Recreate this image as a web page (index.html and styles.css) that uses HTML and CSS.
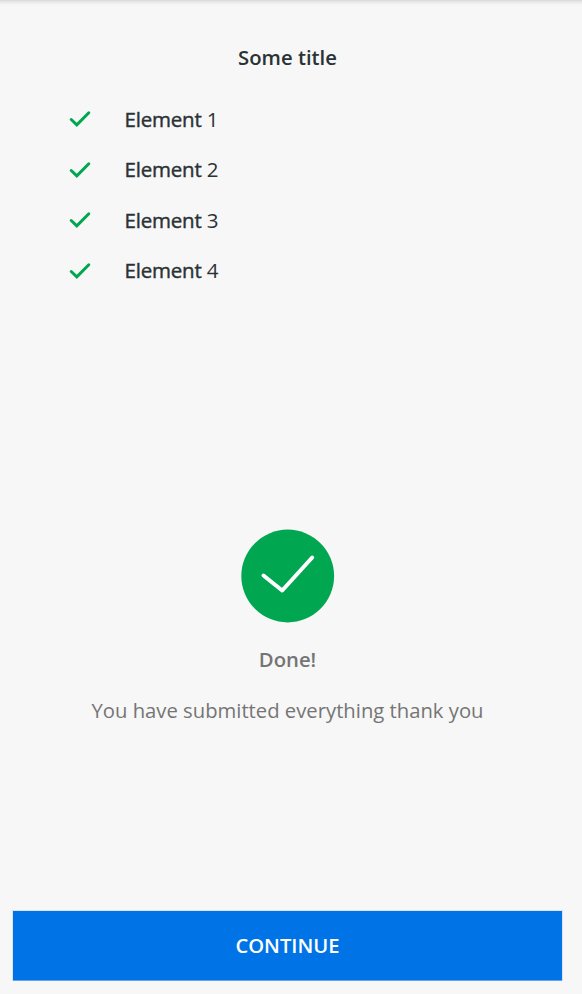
FILE: index.html
```
<!DOCTYPE html>
<html lang="en">
<head>
<meta charset="utf-8">
<title>Some title</title>
<link rel="stylesheet" href="styles.css">
</head>
<body>
<main class="screen">
  <h1 class="title">Some title</h1>
  <ul class="list">
    <li class="item"><svg class="tick" viewBox="0 0 22 18"><path d="M2.200 9.500 7.800 14.800 19.800 2.800"/></svg><span><b>Element</b> 1</span></li>
    <li class="item"><svg class="tick" viewBox="0 0 22 18"><path d="M2.200 9.500 7.800 14.800 19.800 2.800"/></svg><span><b>Element</b> 2</span></li>
    <li class="item"><svg class="tick" viewBox="0 0 22 18"><path d="M2.200 9.500 7.800 14.800 19.800 2.800"/></svg><span><b>Element</b> 3</span></li>
    <li class="item"><svg class="tick" viewBox="0 0 22 18"><path d="M2.200 9.500 7.800 14.800 19.800 2.800"/></svg><span><b>Element</b> 4</span></li>
  </ul>
  <section class="status">
    <svg class="badge" viewBox="0 0 94 94"><circle cx="46.700" cy="47" r="46.400"/><path d="M22.500 46.500 41.200 61.500 71.200 28.500"/></svg>
    <h2 class="done">Done!</h2>
    <p class="message">You have submitted everything thank you</p>
  </section>
  <button class="continue">CONTINUE</button>
</main>
</body>
</html>
```
FILE: styles.css
```
* { box-sizing: border-box; }
body { margin: 0; background: linear-gradient(#d9d9d9, #e9e9e9 2px, #f7f7f7 5px) no-repeat #f7f7f7; font-family: "Open Sans", sans-serif; color: #2b3234; }
.screen { height: 994px; padding: 44px 20px 14px 13px; display: flex; flex-direction: column; }
.title { margin: 0; font-size: 20.3px; line-height: 26px; font-weight: 600; text-align: center; }
.list { list-style: none; margin: 24px 0 0; padding: 0 0 0 56px; }
.item { height: 50.5px; display: flex; align-items: center; gap: 33.5px; font-size: 20.5px; letter-spacing: -0.2px; }
.item span { padding-bottom: 1px; }
.item b { font-weight: 400; -webkit-text-stroke: 0.4px #2b3234; }
.tick { width: 22px; height: 18px; fill: none; stroke: #00a650; stroke-width: 3; stroke-linecap: round; }
.status { margin-top: 233px; display: flex; flex-direction: column; align-items: center; color: #757575; }
.badge { width: 94px; height: 94px; fill: #00a650; }
.badge path { fill: none; stroke: #fff; stroke-width: 4; stroke-linecap: round; stroke-linejoin: round; }
.done { margin: 23px 0 0; font-size: 20.3px; line-height: 26px; font-weight: 600; }
.message { margin: 24px 0 0; font-size: 20.25px; line-height: 29px; }
.continue { margin-top: auto; height: 69px; padding: 0 0 2px; border: 0; background: #0073e6; box-shadow: 0 0 0 1px rgba(0, 80, 200, 0.12), 0 1px #73aeee; color: #fff; font: 600 20.2px "Open Sans", sans-serif; }
```
